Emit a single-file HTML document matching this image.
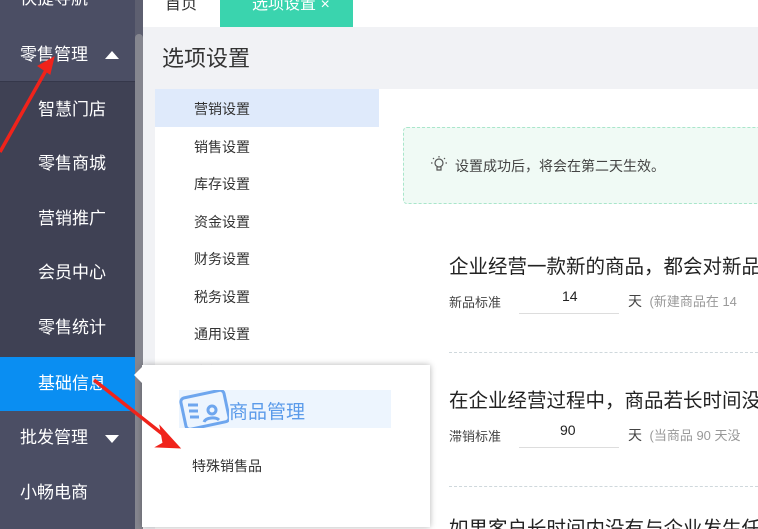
<!DOCTYPE html>
<html style="width:758px;height:529px;overflow:hidden"><head><meta charset="utf-8"><style>
*{margin:0;padding:0;box-sizing:border-box}
body{width:758px;height:529px;overflow:hidden;position:relative;background:#f1f2f5;font-family:"Liberation Sans","Noto Sans CJK SC",sans-serif}
.a{position:absolute}
.side{left:0;top:0;width:135px;height:529px;background:#3f4154}
.si{position:absolute;left:0;width:135px;color:#fff;font-size:17px;line-height:54px;height:54px}
.mi{position:absolute;left:194px;font-size:14px;color:#333}
</style></head><body>
<div class="a side"></div>
<div class="a" style="left:0;top:0;width:135px;height:82px;background:#4b4e64"></div>
<div class="a" style="left:0;top:81px;width:135px;height:1px;background:#35374a"></div>
<div class="si" style="top:-28px;padding-left:20px">快捷导航</div>
<div class="si" style="top:28px;padding-left:20px">零售管理</div>
<div class="a" style="left:105px;top:51px;width:0;height:0;border-left:7px solid transparent;border-right:7px solid transparent;border-bottom:8px solid #fff"></div>
<div class="si" style="top:83px;padding-left:38px">智慧门店</div>
<div class="si" style="top:137px;padding-left:38px">零售商城</div>
<div class="si" style="top:192px;padding-left:38px">营销推广</div>
<div class="si" style="top:246px;padding-left:38px">会员中心</div>
<div class="si" style="top:301px;padding-left:38px">零售统计</div>
<div class="si" style="top:357px;padding-left:38px;background:#0a8ef2">基础信息</div>
<div class="a" style="left:0;top:411px;width:135px;height:118px;background:#4b4e64"></div>
<div class="si" style="top:411px;padding-left:20px">批发管理</div>
<div class="a" style="left:105px;top:435px;width:0;height:0;border-left:7px solid transparent;border-right:7px solid transparent;border-top:8px solid #fff"></div>
<div class="si" style="top:466px;padding-left:20px">小畅电商</div>
<div class="a" style="left:135px;top:0;width:8px;height:529px;background:#5d5f70"></div>
<div class="a" style="left:135px;top:34px;width:8px;height:495px;background:#85868f;border-radius:4px 4px 0 0"></div>
<div class="a" style="left:143px;top:0;width:615px;height:27px;background:#fff"></div>
<div class="a" style="left:165px;top:-10px;font-size:16px;color:#333">首页</div>
<div class="a" style="left:220px;top:0;width:133px;height:27px;background:#3ad4ae"></div>
<div class="a" style="left:252px;top:-10px;font-size:16px;color:#fff">选项设置 ×</div>
<div class="a" style="left:162px;top:41px;font-size:22px;color:#333">选项设置</div>
<div class="a" style="left:155px;top:89px;width:224px;height:440px;background:#fff"></div>
<div class="a" style="left:155px;top:89px;width:224px;height:38px;background:#dfeafb"></div>
<div class="a" style="left:379px;top:89px;width:379px;height:440px;background:#fff"></div>
<div class="mi" style="top:99px">营销设置</div>
<div class="mi" style="top:137px">销售设置</div>
<div class="mi" style="top:174px">库存设置</div>
<div class="mi" style="top:212px">资金设置</div>
<div class="mi" style="top:249px">财务设置</div>
<div class="mi" style="top:287px">税务设置</div>
<div class="mi" style="top:324px">通用设置</div>
<div class="mi" style="top:362px">高级设置</div>
<div class="a" style="left:403px;top:127px;width:370px;height:77px;background:#f0faf5;border:1px dashed #a9e6cb;border-radius:4px"></div>
<svg class="a" style="left:430px;top:155px" width="18" height="18" viewBox="0 0 18 18" fill="none" stroke="#555" stroke-width="1.2"><circle cx="9" cy="8" r="4"/><path d="M7 12v3h4v-3M9 1v1.5M3 3l1 1M15 3l-1 1M1 8h1.5M15.5 8H17"/></svg>
<div class="a" style="left:455px;top:156px;font-size:14px;color:#444">设置成功后，将会在第二天生效。</div>
<div class="a" style="left:449px;top:250px;font-size:19.5px;color:#222;white-space:nowrap">企业经营一款新的商品，都会对新品</div>
<div class="a" style="left:449px;top:292px;font-size:13px;color:#444">新品标准</div>
<div class="a" style="left:519px;top:313px;width:100px;height:1px;background:#ddd"></div>
<div class="a" style="left:562px;top:288px;font-size:14px;color:#222">14</div>
<div class="a" style="left:628px;top:291px;font-size:14px;color:#444;white-space:nowrap">天 <span style="color:#999;font-size:13px">&nbsp;(新建商品在 14</span></div>
<div class="a" style="left:449px;top:352px;width:309px;border-top:1px dashed #cfd8dc"></div>
<div class="a" style="left:449px;top:384px;font-size:19.5px;color:#222;white-space:nowrap">在企业经营过程中，商品若长时间没</div>
<div class="a" style="left:449px;top:426px;font-size:13px;color:#444">滞销标准</div>
<div class="a" style="left:519px;top:447px;width:100px;height:1px;background:#ddd"></div>
<div class="a" style="left:560px;top:422px;font-size:14px;color:#222">90</div>
<div class="a" style="left:628px;top:425px;font-size:14px;color:#444;white-space:nowrap">天 <span style="color:#999;font-size:13px">&nbsp;(当商品 90 天没</span></div>
<div class="a" style="left:449px;top:486px;width:309px;border-top:1px dashed #cfd8dc"></div>
<div class="a" style="left:449px;top:516px;font-size:19.5px;color:#222;white-space:nowrap;height:13px;overflow:hidden;line-height:26px">如果客户长时间内没有与企业发生任</div>
<div class="a" style="left:142px;top:365px;width:288px;height:162px;background:#fff;box-shadow:0 0 6px rgba(0,0,0,.3)"></div>
<div class="a" style="left:134px;top:367px;width:0;height:0;border-top:8px solid transparent;border-bottom:8px solid transparent;border-right:8px solid #fff"></div>
<div class="a" style="left:179px;top:390px;width:212px;height:38px;background:#edf5fe"></div>
<svg class="a" style="left:179px;top:390px" width="50" height="38" viewBox="0 0 50 38" fill="none" stroke="#6ea6ee" stroke-width="3"><rect x="4" y="4" width="44" height="32" rx="4" transform="rotate(-12 25 20)"/><path d="M9 15h10M10 21h9M11 27h9"/><circle cx="33" cy="20" r="4"/><path d="M25 32c2-5 12-5 15-2"/></svg>
<div class="a" style="left:229px;top:397px;font-size:19px;color:#5b9bea">商品管理</div>
<div class="a" style="left:192px;top:456px;font-size:14px;color:#333">特殊销售品</div>
<svg class="a" style="left:0;top:0" width="758" height="529"><g fill="#f0231b" stroke="#f0231b"><path d="M0 152L49 65" stroke-width="3.5"/><path d="M54 57L38 66L50 74Z"/><path d="M94 380L170 440" stroke-width="3.5"/><path d="M180 448L160 426L163 443L156 447Z"/></g></svg>
</body></html>
